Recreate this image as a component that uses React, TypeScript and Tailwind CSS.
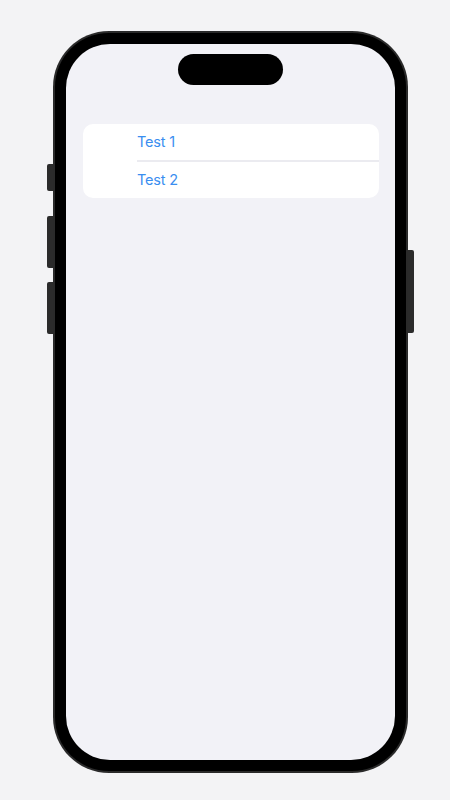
import React from "react";

export default function App() {
  return (
    <div className="w-[450px] h-[800px] bg-[#f3f3f5] pl-[53px] pt-[31px] overflow-hidden" style={{ fontFamily: "Inter, 'Liberation Sans', sans-serif" }}>
      <div className="relative w-[355px] h-[742px]">
        {/* side buttons */}
        <div className="absolute left-[-6px] top-[133px] w-[7px] h-[27px] rounded-l-[2px] bg-[#2b2b2b]" />
        <div className="absolute left-[-6px] top-[185px] w-[7px] h-[52px] rounded-l-[2px] bg-[#2b2b2b]" />
        <div className="absolute left-[-6px] top-[251px] w-[7px] h-[52px] rounded-l-[2px] bg-[#2b2b2b]" />
        <div className="absolute right-[-6px] top-[219px] w-[7px] h-[83px] rounded-r-[2px] bg-[#2b2b2b]" />
        <div className="relative w-full h-full rounded-[56px] bg-[#2a2a2a] p-[2px]">
          <div className="w-full h-full rounded-[54px] bg-black p-[11px]">
            <div className="w-full h-full rounded-[44px] bg-[#f2f2f7] flex flex-col overflow-hidden">
              <div className="self-center mt-[10px] w-[105px] h-[31px] rounded-full bg-black" />
              <div className="mt-[39px] ml-[17px] mr-[16px] bg-white rounded-[10px] flex flex-col">
                <div className="h-[36px] flex items-center pl-[54px]">
                  <span className="text-[14.5px] text-[#3a8ef0] tracking-[-0.2px]">Test 1</span>
                </div>
                <div className="ml-[54px] h-[1.5px] bg-[#ebebf0]" />
                <div className="h-[36.5px] flex items-center pl-[54px]">
                  <span className="text-[14.5px] text-[#3a8ef0] tracking-[-0.2px]">Test 2</span>
                </div>
              </div>
            </div>
          </div>
        </div>
      </div>
    </div>
  );
}
